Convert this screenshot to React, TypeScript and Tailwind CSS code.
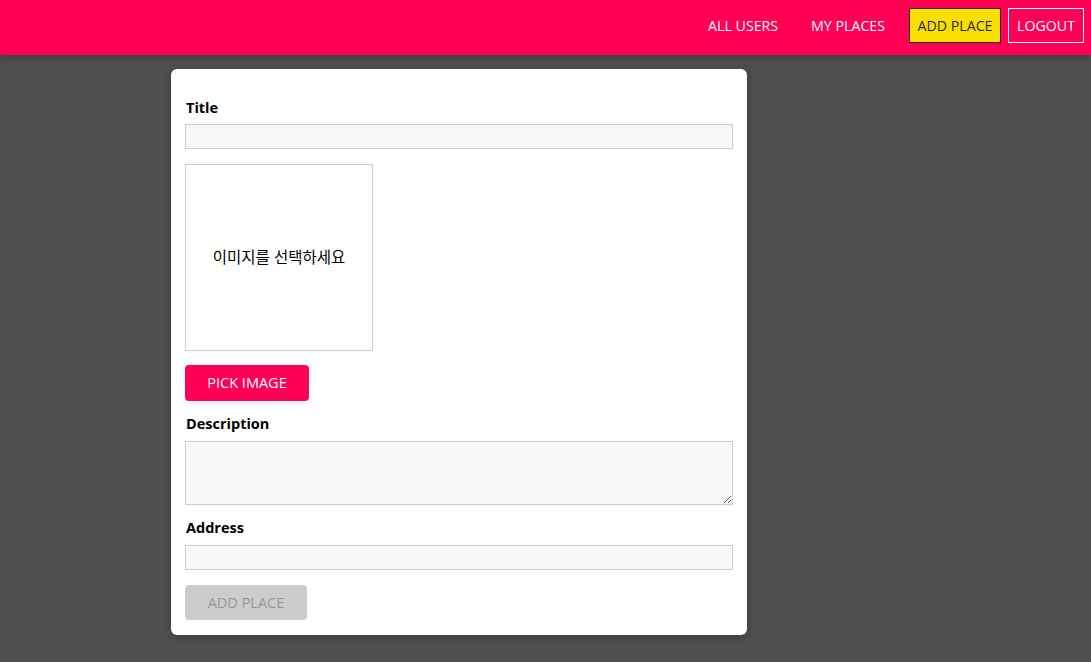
export default function App() {
    const font = { fontFamily: '"Open Sans", "Noto Sans CJK KR", sans-serif' };

    return (
        <div className="min-h-[662px] bg-[#4f4f4f]" style={font}>
            {/* Header */}
            <header className="h-[55px] bg-[#ff0055] flex items-start justify-end pt-[8px] pr-[7px] shadow-[0_2px_8px_rgba(0,0,0,0.26)]">
                <nav className="flex items-center text-[14.2px] leading-[17px] text-white">
                    <a className="px-2 py-2 border border-transparent">ALL USERS</a>
                    <a className="ml-[15px] px-2 py-2 border border-transparent">MY PLACES</a>
                    <a className="ml-[15px] w-[92px] text-center py-2 border border-[#292929] bg-[#f8df00] text-[#292929]">ADD PLACE</a>
                    <button className="ml-[7px] w-[76px] text-center py-2 border border-white text-white">LOGOUT</button>
                </nav>
            </header>

            {/* Form card */}
            <div className="ml-[171px] mt-[14px] w-[576px] bg-white rounded-[6px] shadow-[0_2px_8px_rgba(0,0,0,0.26)] px-[14px] pt-[29px] pb-[15px] flex flex-col">
                <label className="block font-bold text-[14.5px] leading-[20px] text-black px-px">Title</label>
                <input className="mt-[6px] h-[25px] w-full border border-[#ccc] bg-[#f7f7f7]" />

                <div className="mt-[15px] w-[188px] h-[187px] border border-[#ccc] flex items-center justify-center text-[15.5px] text-black">
                    이미지를 선택하세요
                </div>

                <button className="mt-[14px] w-[124px] h-[36px] rounded-[4px] bg-[#ff0055] text-white text-[14.5px]">
                    PICK IMAGE
                </button>

                <label className="mt-[13px] block font-bold text-[14.5px] leading-[20px] text-black px-px">Description</label>
                <textarea className="mt-[7px] h-[64px] w-full border border-[#ccc] bg-[#f7f7f7] resize-y" />

                <label className="mt-[13px] block font-bold text-[14.5px] leading-[20px] text-black px-px">Address</label>
                <input className="mt-[7px] h-[25px] w-full border border-[#ccc] bg-[#f7f7f7]" />

                <button disabled className="mt-[15px] w-[122px] h-[35px] rounded-[4px] bg-[#ccc] text-[#979797] text-[14.5px]">
                    ADD PLACE
                </button>
            </div>
        </div>
    );
}
